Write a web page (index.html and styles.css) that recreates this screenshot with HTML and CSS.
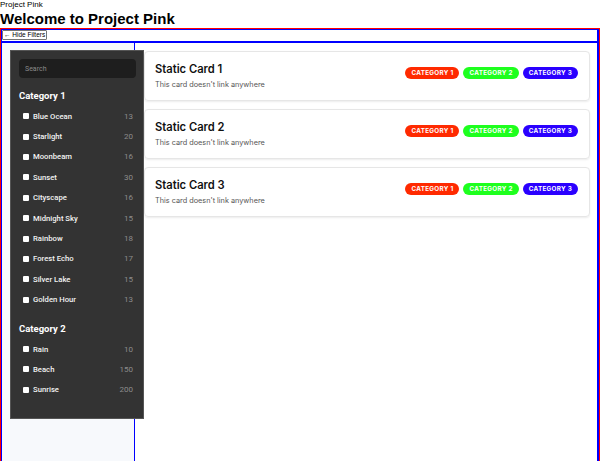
FILE: index.html
```html
<!DOCTYPE html>
<html lang="en">
<head>
<meta charset="utf-8">
<title>Project Pink</title>
<link rel="stylesheet" href="styles.css">
</head>
<body>
<div class="site-name">Project Pink</div>
<h1 class="page-title">Welcome to Project Pink</h1>
<div class="frame">
  <div class="layout">
    <button class="toggle">&larr; Hide Filters</button>
    <div class="content">
      <aside class="filters-col">
        <div class="panel">
          <input class="search" type="text" placeholder="Search">
          <h2 class="cat-title">Category 1</h2>
          <ul class="options">
            <li class="option"><span class="box"></span><span class="label">Blue Ocean</span><span class="count">13</span></li>
            <li class="option"><span class="box"></span><span class="label">Starlight</span><span class="count">20</span></li>
            <li class="option"><span class="box"></span><span class="label">Moonbeam</span><span class="count">16</span></li>
            <li class="option"><span class="box"></span><span class="label">Sunset</span><span class="count">30</span></li>
            <li class="option"><span class="box"></span><span class="label">Cityscape</span><span class="count">16</span></li>
            <li class="option"><span class="box"></span><span class="label">Midnight Sky</span><span class="count">15</span></li>
            <li class="option"><span class="box"></span><span class="label">Rainbow</span><span class="count">18</span></li>
            <li class="option"><span class="box"></span><span class="label">Forest Echo</span><span class="count">17</span></li>
            <li class="option"><span class="box"></span><span class="label">Silver Lake</span><span class="count">15</span></li>
            <li class="option"><span class="box"></span><span class="label">Golden Hour</span><span class="count">13</span></li>
          </ul>
          <h2 class="cat-title cat-second">Category 2</h2>
          <ul class="options">
            <li class="option"><span class="box"></span><span class="label">Rain</span><span class="count">10</span></li>
            <li class="option"><span class="box"></span><span class="label">Beach</span><span class="count">150</span></li>
            <li class="option"><span class="box"></span><span class="label">Sunrise</span><span class="count">200</span></li>
          </ul>
        </div>
      </aside>
      <main class="cards">
        <div class="card">
          <div class="card-text">
            <div class="card-title">Static Card 1</div>
            <div class="card-sub">This card doesn't link anywhere</div>
          </div>
          <div class="badges">
            <span class="badge red">Category 1</span>
            <span class="badge green">Category 2</span>
            <span class="badge blue">Category 3</span>
          </div>
        </div>
        <div class="card">
          <div class="card-text">
            <div class="card-title">Static Card 2</div>
            <div class="card-sub">This card doesn't link anywhere</div>
          </div>
          <div class="badges">
            <span class="badge red">Category 1</span>
            <span class="badge green">Category 2</span>
            <span class="badge blue">Category 3</span>
          </div>
        </div>
        <div class="card">
          <div class="card-text">
            <div class="card-title">Static Card 3</div>
            <div class="card-sub">This card doesn't link anywhere</div>
          </div>
          <div class="badges">
            <span class="badge red">Category 1</span>
            <span class="badge green">Category 2</span>
            <span class="badge blue">Category 3</span>
          </div>
        </div>
      </main>
    </div>
  </div>
</div>
</body>
</html>
```
FILE: styles.css
```css
html, body {
  margin: 0;
  padding: 0;
  background: #ffffff;
  font-family: "Liberation Sans", Arial, sans-serif;
  color: #000;
  overflow: hidden;
}

.site-name {
  font-size: 8px;
  line-height: 10px;
}

.page-title {
  margin: 0;
  font-size: 15px;
  line-height: 18px;
  font-weight: 700;
}

.frame {
  border-top: 1px solid #ff0000;
  border-left: 1px solid #ff0000;
  border-right: 1px solid #ff0000;
}

.layout {
  border: 1px solid #0000ff;
  border-bottom: none;
  border-right-width: 2px;
}

.toggle {
  display: block;
  margin: 0;
  padding: 0 1px;
  height: 10px;
  font-family: "Liberation Sans", Arial, sans-serif;
  font-size: 6.5px;
  line-height: 8px;
  background: #fff;
  border: 1px solid #767676;
  border-radius: 1px;
  color: #000;
}

.content {
  margin-top: 1px;
  border-top: 2px solid #0000ff;
  display: flex;
  height: 430px;
}

.filters-col {
  width: 124px;
  flex: none;
  background: #f7f9fc;
  border-right: 1px solid #0000ff;
  padding: 7px 0 0 8px;
}

.panel {
  width: 116px;
  flex: none;
  background: #333333;
  border: 1px solid #555555;
  padding: 8px 8px 18px 8px;
  position: relative;
  z-index: 1;
  font-family: Roboto, "Liberation Sans", sans-serif;
}

.search {
  display: block;
  box-sizing: border-box;
  width: 117px;
  height: 19px;
  margin: 0;
  border: none;
  border-radius: 4px;
  background: #1e1e1e;
  color: #ddd;
  padding: 0 6px;
  font-size: 7px;
  font-family: Roboto, "Liberation Sans", sans-serif;
  outline: none;
}
.search::placeholder {
  color: #8a8a8a;
}

.cat-title {
  margin: 11px 0 4px 0;
  font-size: 9.5px;
  line-height: 13px;
  color: #ffffff;
  font-weight: 700;
}
.cat-second {
  margin-top: 12px;
}

.options {
  list-style: none;
  margin: 0;
  padding: 0;
}

.option {
  display: flex;
  align-items: center;
  height: 20.4px;
  padding-left: 4px;
  font-size: 7.7px;
  color: #ffffff;
}

.box {
  width: 6px;
  height: 6px;
  background: #ffffff;
  border-radius: 1px;
  margin-right: 4px;
  flex: none;
}

.label {
  flex: 1;
  font-weight: 500;
  font-size: 7.7px;
  color: #f2f2f2;
}

.count {
  color: #8c8c8c;
  font-size: 8px;
  margin-right: 2px;
}

.cards {
  flex: 1;
  background: #ffffff;
  padding: 8px 7px 0 9px;
  display: flex;
  flex-direction: column;
  gap: 8px;
}

.card {
  height: 48px;
  flex: none;
  border: 1px solid #e6e6e6;
  border-radius: 4px;
  box-shadow: 0 1px 2px rgba(0,0,0,0.08);
  display: flex;
  justify-content: space-between;
  align-items: flex-start;
  padding: 0 11px 0 10px;
  font-family: Inter, "Liberation Sans", sans-serif;
}

.card-text {
  padding-top: 10px;
}

.card-title {
  font-size: 11.2px;
  line-height: 15px;
  font-weight: 600;
  color: #111111;
}

.card-sub {
  margin-top: 3px;
  font-size: 7.3px;
  line-height: 10px;
  color: #555555;
}

.badges {
  display: flex;
  gap: 4px;
  padding-top: 15px;
}

.badge {
  display: inline-block;
  height: 12px;
  line-height: 12px;
  padding: 0 6px;
  border-radius: 6px;
  color: #ffffff;
  font-size: 6.3px;
  font-weight: 700;
  text-transform: uppercase;
  letter-spacing: 0.3px;
}
.badge.red { background: #ff2a00; }
.badge.green { background: #1eff1e; }
.badge.blue { background: #2a00ff; }
```
